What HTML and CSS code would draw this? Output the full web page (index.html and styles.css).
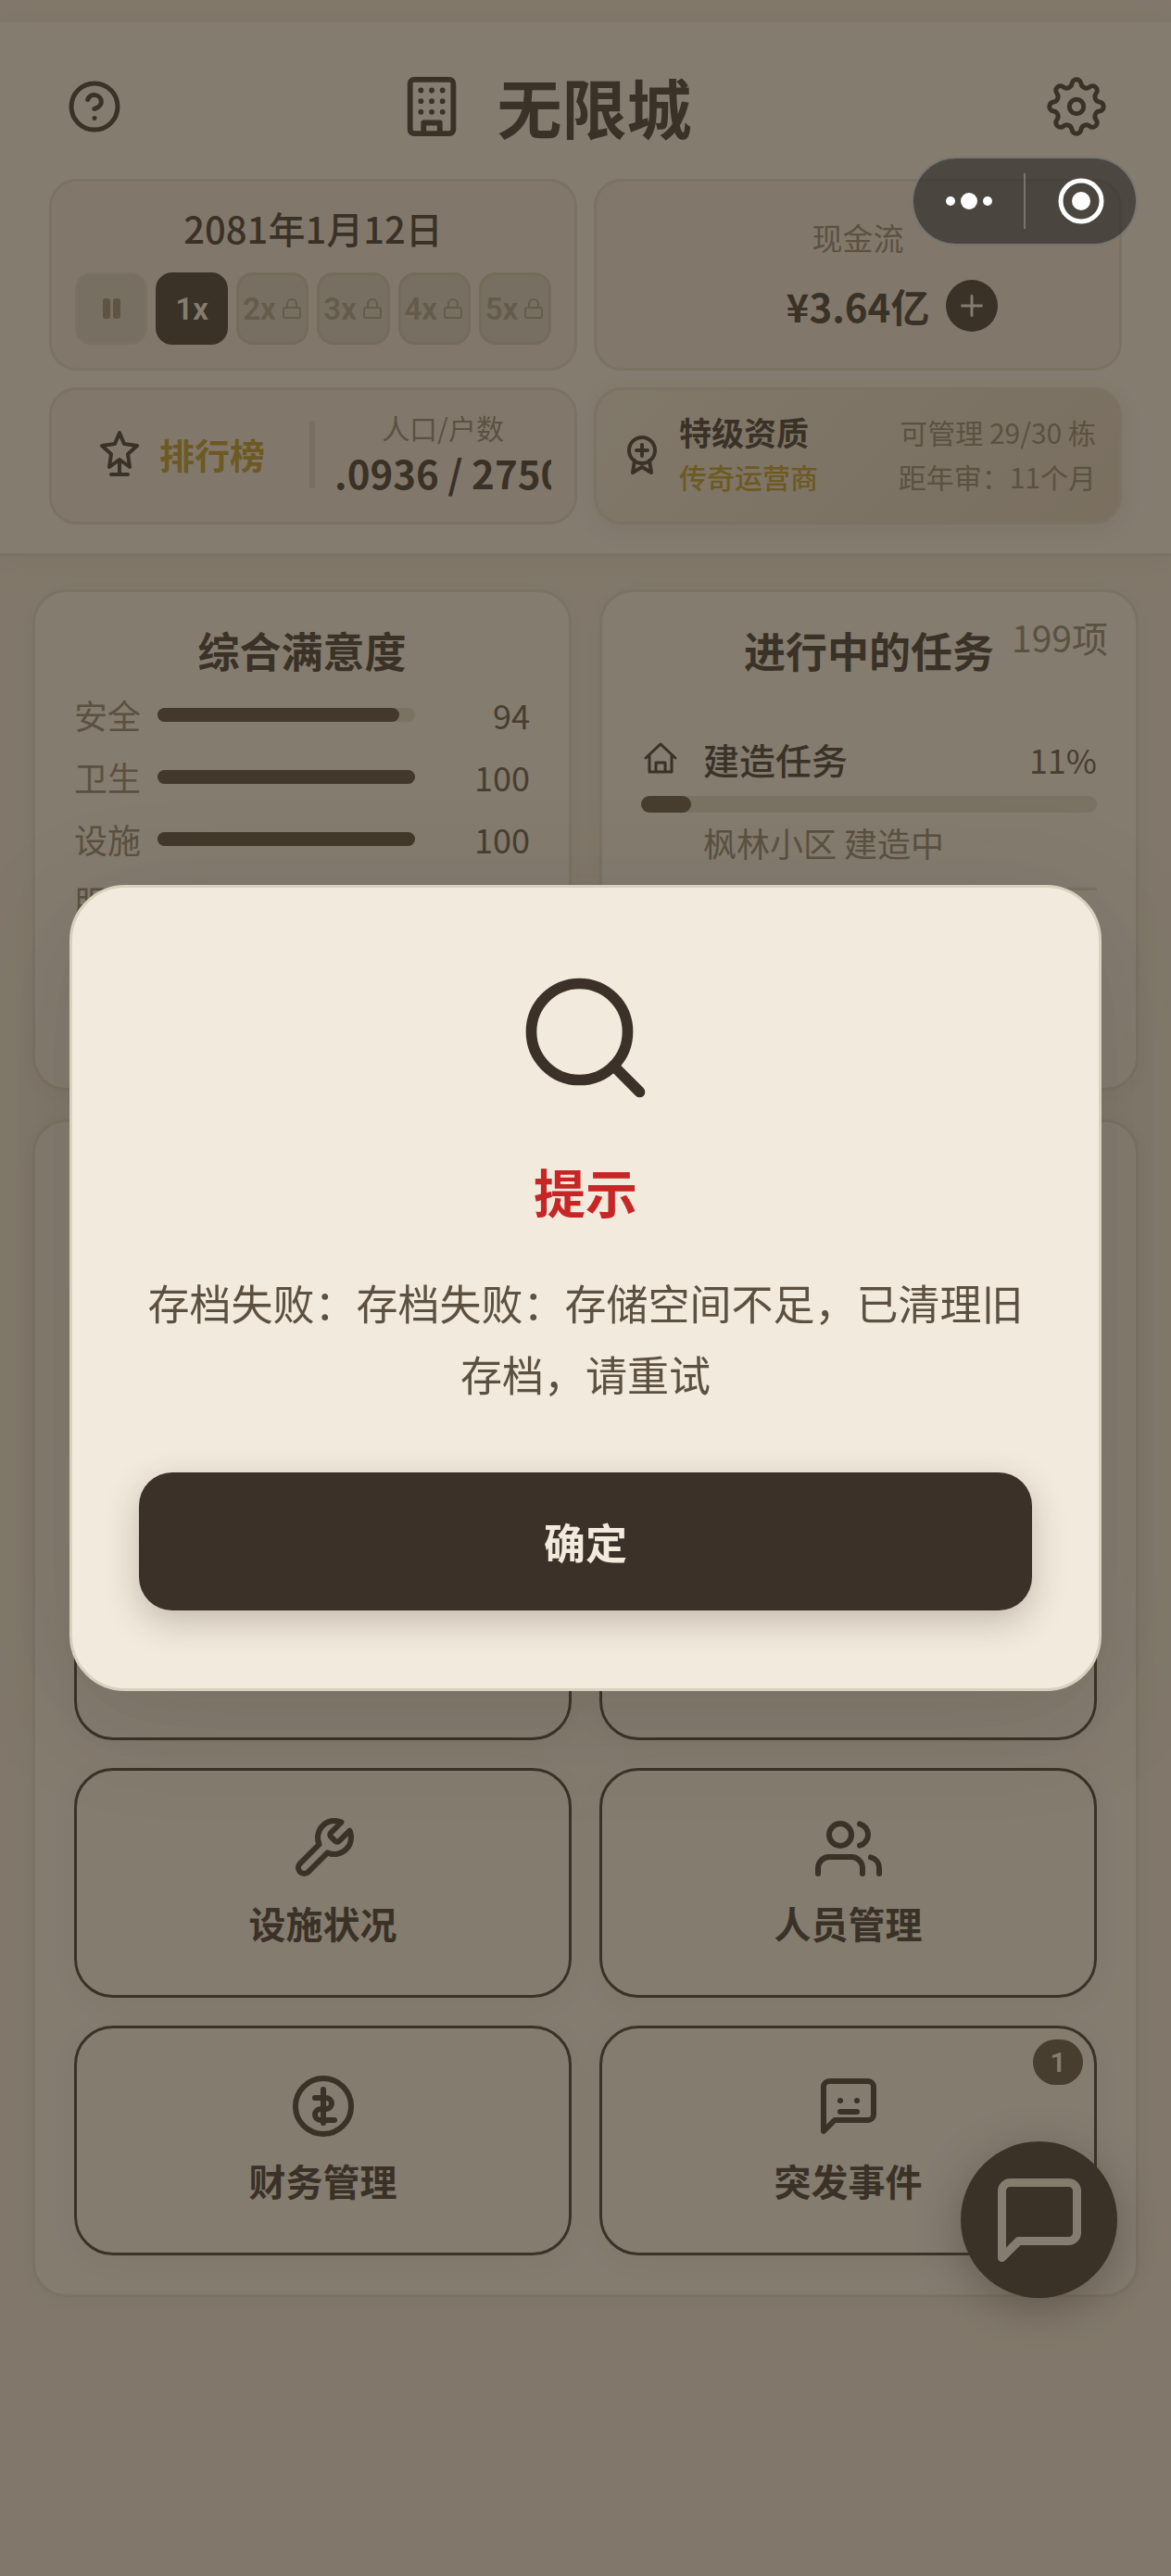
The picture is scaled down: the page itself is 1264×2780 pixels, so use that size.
FILE: index.html
```html
<!DOCTYPE html>
<html lang="zh-CN">
<head>
  <meta charset="UTF-8" />
  <meta name="viewport" content="width=device-width, initial-scale=1" />
  <title>无限城</title>
  <link rel="stylesheet" href="styles.css">
</head>
<body>
  <header class="top">
    <div class="top-bar">
      <button class="icon-btn" aria-label="帮助">
        <svg class="icon" width="60" height="60" viewBox="0 0 24 24"><circle cx="12" cy="12" r="10"/><path d="M9.09 9a3 3 0 0 1 5.83 1c0 2-3 3-3 3M12 17h.01"/></svg>
      </button>
      <div class="brand">
        <svg class="icon" width="70" height="70" viewBox="0 0 24 24"><rect x="4" y="2" width="16" height="20" rx="1.5"/><path d="M9 22v-4h6v4M8 6h.01M12 6h.01M16 6h.01M8 10h.01M12 10h.01M16 10h.01M8 14h.01M12 14h.01M16 14h.01"/></svg>
        <h1>无限城</h1>
      </div>
      <button class="icon-btn" aria-label="设置">
        <svg class="icon" width="66" height="66" viewBox="0 0 24 24" stroke-width="1.8"><circle cx="12" cy="12" r="2.8"/><path d="M10.21 2.98A1.8 1.8 0 0 1 13.79 2.98A2.1 2.1 0 0 0 17.11 4.35A1.8 1.8 0 0 1 19.65 6.89A2.1 2.1 0 0 0 21.02 10.21A1.8 1.8 0 0 1 21.02 13.79A2.1 2.1 0 0 0 19.65 17.11A1.8 1.8 0 0 1 17.11 19.65A2.1 2.1 0 0 0 13.79 21.02A1.8 1.8 0 0 1 10.21 21.02A2.1 2.1 0 0 0 6.89 19.65A1.8 1.8 0 0 1 4.35 17.11A2.1 2.1 0 0 0 2.98 13.79A1.8 1.8 0 0 1 2.98 10.21A2.1 2.1 0 0 0 4.35 6.89A1.8 1.8 0 0 1 6.89 4.35A2.1 2.1 0 0 0 10.21 2.98Z"/></svg>
      </button>
    </div>

    <div class="stats">
      <div class="stat">
        <div class="date">2081年1月12日</div>
        <div class="speeds">
          <button class="speed pause" aria-label="暂停"><i></i><i></i></button>
          <button class="speed active">1x</button>
          <button class="speed locked">2x<svg class="lock" viewBox="0 0 24 24"><rect x="3" y="11" width="18" height="11" rx="2"/><path d="M7 11V7a5 5 0 0 1 10 0v4"/></svg></button>
          <button class="speed locked">3x<svg class="lock" viewBox="0 0 24 24"><rect x="3" y="11" width="18" height="11" rx="2"/><path d="M7 11V7a5 5 0 0 1 10 0v4"/></svg></button>
          <button class="speed locked">4x<svg class="lock" viewBox="0 0 24 24"><rect x="3" y="11" width="18" height="11" rx="2"/><path d="M7 11V7a5 5 0 0 1 10 0v4"/></svg></button>
          <button class="speed locked">5x<svg class="lock" viewBox="0 0 24 24"><rect x="3" y="11" width="18" height="11" rx="2"/><path d="M7 11V7a5 5 0 0 1 10 0v4"/></svg></button>
        </div>
      </div>

      <div class="stat cash">
        <span class="cash-label">现金流</span>
        <div class="cash-row">
          <strong>¥3.64亿</strong>
          <button class="plus" aria-label="增加现金">
            <svg class="icon" width="28" height="28" viewBox="0 0 24 24" stroke-width="2.5"><path d="M12 3v18M3 12h18"/></svg>
          </button>
        </div>
      </div>

      <div class="stat people">
        <a class="rank" href="#">
          <svg class="icon" width="54" height="54" viewBox="0 0 54 54" stroke-width="4"><path d="M27 4L32 16L46 18L36 27L38 41L27 33L16 41L18 27L8 18L22 16ZM27 33V48M18 49H36"/></svg>
          排行榜
        </a>
        <span class="divider"></span>
        <div class="population">
          <span>人口/户数</span>
          <strong>.0936 / 2750</strong>
        </div>
      </div>

      <div class="stat cert">
        <svg class="icon" width="48" height="48" viewBox="0 0 48 48" stroke-width="4"><circle cx="24" cy="20" r="14"/><path d="M24 14v12M18 20h12M16 31L14 44L24 38L34 44L32 31"/></svg>
        <div class="cert-name">
          <strong>特级资质</strong>
          <span>传奇运营商</span>
        </div>
        <div class="cert-info">
          <span>可管理 29/30 栋</span>
          <span>距年审：11个月</span>
        </div>
      </div>
    </div>
  </header>

  <main>
    <section class="panel">
      <h2>综合满意度</h2>
      <div class="score"><span>安全</span><div class="bar"><i style="width: 94%"></i></div><b>94</b></div>
      <div class="score"><span>卫生</span><div class="bar"><i style="width: 100%"></i></div><b>100</b></div>
      <div class="score"><span>设施</span><div class="bar"><i style="width: 100%"></i></div><b>100</b></div>
      <div class="score"><span>服务</span></div>
    </section>

    <section class="panel">
      <h2>进行中的任务</h2>
      <span class="count">199项</span>
      <div class="task">
        <div class="task-head">
          <svg class="icon" width="42" height="42" viewBox="0 0 42 42" stroke-width="3"><path d="M5 20L21 5L37 20M9 17V35H33V17M16 35V25H26V35"/></svg>
          <strong>建造任务</strong>
          <span>11%</span>
        </div>
        <div class="task-bar"><i style="width: 11%"></i></div>
        <p>枫林小区 建造中</p>
      </div>
    </section>

    <section class="panel menu">
      <div class="tiles">
        <button class="tile" aria-label="菜单"></button>
        <button class="tile" aria-label="菜单"></button>
        <button class="tile" aria-label="菜单"></button>
        <button class="tile" aria-label="菜单"></button>
        <button class="tile">
          <svg class="icon" width="72" height="72" viewBox="0 0 24 24"><path d="M14.7 6.3a1 1 0 0 0 0 1.4l1.6 1.6a1 1 0 0 0 1.4 0l3.77-3.77a6 6 0 0 1-7.94 7.94l-6.91 6.91a2.12 2.12 0 0 1-3-3l6.91-6.91a6 6 0 0 1 7.94-7.94l-3.76 3.76z"/></svg>
          设施状况
        </button>
        <button class="tile">
          <svg class="icon" width="72" height="72" viewBox="0 0 24 24"><path d="M17 21v-2a4 4 0 0 0-4-4H5a4 4 0 0 0-4 4v2M23 21v-2a4 4 0 0 0-3-3.87M16 3.13a4 4 0 0 1 0 7.75"/><circle cx="9" cy="7" r="4"/></svg>
          人员管理
        </button>
        <button class="tile">
          <svg class="icon" width="72" height="72" viewBox="0 0 24 24"><circle cx="12" cy="12" r="10"/><path d="M12 6v12M9 9h4a2 2 0 0 1 0 4h-2a2 2 0 0 0 0 4h5"/></svg>
          财务管理
        </button>
        <button class="tile">
          <svg class="icon" width="72" height="72" viewBox="0 0 24 24"><path d="M21 15a2 2 0 0 1-2 2H7l-4 4V5a2 2 0 0 1 2-2h14a2 2 0 0 1 2 2zM9 10h.01M15 10h.01M9 14h6"/></svg>
          突发事件
          <span class="badge">1</span>
        </button>
      </div>
    </section>
  </main>

  <button class="chat" aria-label="聊天">
    <svg class="icon" width="108" height="108" viewBox="0 0 24 24"><path d="M21 15a2 2 0 0 1-2 2H7l-4 4V5a2 2 0 0 1 2-2h14a2 2 0 0 1 2 2z"/></svg>
  </button>

  <div class="mask">
    <div class="dialog" role="alertdialog" aria-labelledby="tip-title" aria-describedby="tip-text">
      <svg class="icon" width="156" height="156" viewBox="0 0 24 24" stroke-width="1.8"><circle cx="11" cy="11" r="8"/><path d="M21 21l-4.35-4.35"/></svg>
      <h2 id="tip-title">提示</h2>
      <p id="tip-text">存档失败：存档失败：存储空间不足，已清理旧存档，请重试</p>
      <button>确定</button>
    </div>
  </div>

  <!-- 小程序胶囊 -->
  <div class="capsule">
    <button aria-label="更多">
      <svg width="52" height="52" viewBox="0 0 52 52"><circle cx="6" cy="26" r="5"/><circle cx="26" cy="26" r="9"/><circle cx="46" cy="26" r="5"/></svg>
    </button>
    <span></span>
    <button aria-label="关闭">
      <svg width="52" height="52" viewBox="0 0 52 52"><circle cx="26" cy="26" r="10"/><circle cx="26" cy="26" r="22" fill="none" stroke="#fff" stroke-width="5"/></svg>
    </button>
  </div>
</body>
</html>
```
FILE: styles.css
```css
:root {
  --ink: #3b3128;
  --text: #5c5040;
  --muted: #8a7f69;
  --gold: #b8951c;
  --paper: #f2eadc;
  --base: #ebe2d1;
  --line: #d9d1bf;
}

* {
  box-sizing: border-box;
}

body {
  margin: 0;
  padding-top: 24px;
  min-height: 100vh;
  font-family: "Noto Sans CJK SC", "Noto Sans", sans-serif;
  color: var(--ink);
  background: var(--base);
}

button {
  font-family: inherit;
  color: inherit;
  border: none;
  background: none;
  padding: 0;
  cursor: pointer;
}

h1, h2, p {
  margin: 0;
}

i, b {
  font-style: normal;
  font-weight: 400;
}

strong {
  font-weight: 600;
}

.icon {
  display: block;
  flex: none;
  fill: none;
  stroke: currentColor;
  stroke-linecap: round;
  stroke-linejoin: round;
}

.icon:not([stroke-width]) {
  stroke-width: 2;
}

/* 顶部 */
.top {
  padding: 56px 53px 31px;
  background: var(--paper);
  border-bottom: 3px solid var(--line);
  box-shadow: 0 4px 30px rgba(58, 48, 41, 0.08);
}

.top-bar {
  display: flex;
  align-items: center;
  justify-content: space-between;
  height: 70px;
  padding: 0 16px 0 19px;
  margin-bottom: 43px;
}

.brand {
  display: flex;
  align-items: center;
  gap: 36px;
  padding-right: 84px;
}

.brand h1 {
  font-size: 70px;
  line-height: 70px;
  font-weight: 700;
}

.stats {
  display: grid;
  grid-template-columns: 1fr 1fr;
  gap: 18px;
}

.stat {
  min-width: 0;
  padding: 22px 25px 25px;
  border: 3px solid var(--line);
  border-radius: 30px;
  background: var(--base);
}

.date {
  margin-bottom: 20px;
  font-size: 40px;
  line-height: 56px;
  font-weight: 500;
  text-align: center;
}

.speeds {
  display: grid;
  grid-template-columns: repeat(6, 1fr);
  gap: 9px;
}

.speed {
  display: flex;
  align-items: center;
  justify-content: center;
  gap: 5px;
  height: 78px;
  border: 3px solid var(--line);
  border-radius: 18px;
  background: #d3cab9;
  font: 600 33px Roboto, sans-serif;
}

.pause {
  gap: 3px;
  border-color: #d9cfbf;
}

.pause i {
  width: 8px;
  height: 22px;
  border-radius: 3px;
  background: #96886f;
}

.active {
  border-color: var(--ink);
  background: var(--ink);
  color: var(--paper);
}

.locked {
  color: #a59983;
  border-color: #cec0a7;
}

.lock {
  flex: none;
  width: 24px;
  height: 24px;
  fill: none;
  stroke: currentColor;
  stroke-width: 2;
}

.cash {
  display: flex;
  flex-direction: column;
  align-items: stretch;
  justify-content: center;
  gap: 22px;
  text-align: center;
}

.cash-label {
  font-size: 33px;
  line-height: 48px;
  color: var(--muted);
}

.cash-row {
  display: grid;
  grid-template-columns: 1fr auto 1fr;
  align-items: center;
  gap: 18px;
}

.cash-row strong {
  grid-column: 2;
  font-size: 42px;
  line-height: 56px;
}

.plus {
  display: grid;
  place-items: center;
  width: 56px;
  height: 56px;
  border-radius: 50%;
  background: var(--ink);
  color: var(--paper);
}

.people,
.cert {
  display: flex;
  align-items: center;
  padding-top: 20px;
  padding-bottom: 24px;
}

.rank {
  display: flex;
  align-items: center;
  gap: 16px;
  padding: 0 48px 0 21px;
  color: var(--gold);
  font-size: 38px;
  line-height: 56px;
  font-weight: 600;
  white-space: nowrap;
  text-decoration: none;
}

.rank .icon {
  color: var(--ink);
}

.divider {
  flex: none;
  width: 6px;
  height: 73px;
  background: #d3cab9;
}

.population {
  flex: 1;
  min-width: 0;
  margin-left: 21px;
  display: flex;
  flex-direction: column;
  text-align: center;
}

.population span {
  font-size: 30px;
  line-height: 40px;
  color: var(--muted);
}

.population strong {
  overflow: hidden;
  font-size: 42px;
  line-height: 58px;
  text-align: left;
  white-space: nowrap;
}

.cert {
  background: linear-gradient(135deg, var(--base), #d8cab5);
  box-shadow: 0 6px 24px rgba(58, 48, 41, 0.08);
}

.cert-name,
.cert-info {
  display: flex;
  flex-direction: column;
  font-size: 30px;
  line-height: 48px;
}

.cert-name {
  margin-left: 16px;
  color: var(--gold);
  font-weight: 500;
}

.cert-name strong {
  font-size: 35px;
  color: var(--ink);
}

.cert-info {
  margin-left: auto;
  color: var(--muted);
  text-align: right;
}

/* 主体 */
main {
  display: grid;
  grid-template-columns: 1fr 1fr;
  grid-template-rows: 541px auto;
  gap: 31px 30px;
  padding: 36px 35px 200px;
}

.panel {
  position: relative;
  padding: 33px 42px 42px;
  border: 3px solid var(--line);
  border-radius: 36px;
  background: var(--paper);
  box-shadow: 0 4px 24px rgba(58, 48, 41, 0.06);
}

.panel h2 {
  margin-bottom: 15px;
  font-size: 45px;
  line-height: 60px;
  font-weight: 700;
  text-align: center;
}

.score {
  display: grid;
  grid-template-columns: 72px 278px 1fr;
  align-items: center;
  column-gap: 18px;
  height: 48px;
  margin-bottom: 19px;
  font-size: 36px;
  line-height: 48px;
  color: var(--muted);
}

.score b {
  color: var(--text);
  text-align: right;
}

.bar {
  height: 15px;
  border-radius: 8px;
  background: var(--line);
}

.bar i {
  display: block;
  height: 100%;
  border-radius: 8px;
  background: #4e4334;
}

.count {
  position: absolute;
  top: 20px;
  right: 30px;
  font-size: 39px;
  line-height: 56px;
  color: var(--muted);
}

.task {
  padding: 47px 0 25px;
  border-bottom: 3px solid var(--line);
}

.task-head {
  display: flex;
  align-items: center;
  height: 50px;
  margin-bottom: 15px;
  line-height: 50px;
}

.task-head strong {
  margin-left: 25px;
  font-size: 39px;
  font-weight: 500;
}

.task-head span {
  margin-left: auto;
  font-size: 36px;
  color: var(--text);
}

.task-bar {
  height: 18px;
  border-radius: 9px;
  background: var(--line);
}

.task-bar i {
  display: block;
  height: 100%;
  border-radius: 9px;
  background: var(--text);
}

.task p {
  margin: 8px 0 0 67px;
  font-size: 36px;
  line-height: 48px;
  color: var(--muted);
}

.menu {
  grid-column: 1 / -1;
  padding-top: 141px;
}

.tiles {
  display: grid;
  grid-template-columns: 1fr 1fr;
  grid-auto-rows: 248px;
  gap: 30px;
}

.tile {
  position: relative;
  display: flex;
  flex-direction: column;
  align-items: center;
  justify-content: center;
  gap: 16px;
  padding-bottom: 2px;
  border: 3px solid var(--ink);
  border-radius: 42px;
  font-size: 40px;
  line-height: 56px;
  font-weight: 600;
  box-shadow: 0 6px 30px rgba(58, 48, 41, 0.05);
}

.badge {
  position: absolute;
  top: 12px;
  right: 12px;
  min-width: 54px;
  border-radius: 25px;
  background: var(--text);
  color: var(--paper);
  font: 600 30px/49px Roboto, sans-serif;
}

.chat {
  position: fixed;
  right: 58px;
  bottom: 300px;
  display: grid;
  place-items: center;
  width: 169px;
  height: 169px;
  border-radius: 50%;
  background: var(--ink);
  color: var(--paper);
  box-shadow: 0 12px 48px rgba(58, 48, 41, 0.4);
}

/* 弹窗 */
.mask {
  position: fixed;
  inset: 0;
  display: flex;
  align-items: center;
  justify-content: center;
  padding: 0 75px;
  background: rgba(59, 50, 39, 0.6);
}

.dialog {
  width: 100%;
  display: flex;
  flex-direction: column;
  align-items: center;
  padding: 84px 72px;
  border: 3px solid var(--line);
  border-radius: 60px;
  background: var(--paper);
  box-shadow: 0 24px 120px rgba(58, 48, 41, 0.18);
}

.dialog h2 {
  margin: 53px 0 48px;
  font-size: 56px;
  line-height: 68px;
  color: #c62626;
}

.dialog p {
  margin-bottom: 68px;
  font-size: 45px;
  line-height: 77px;
  text-align: center;
  color: var(--text);
}

.dialog button {
  align-self: stretch;
  height: 149px;
  border-radius: 36px;
  background: var(--ink);
  color: var(--paper);
  font-size: 45px;
  font-weight: 600;
  box-shadow: 0 12px 36px rgba(58, 48, 41, 0.25);
}

.capsule {
  position: fixed;
  top: 169px;
  right: 36px;
  display: flex;
  align-items: center;
  width: 244px;
  height: 96px;
  border: 2px solid rgba(255, 255, 255, 0.25);
  border-radius: 48px;
  background: rgba(20, 20, 20, 0.5);
}

.capsule button {
  flex: 1;
  display: grid;
  place-items: center;
}

.capsule svg {
  fill: #fff;
}

.capsule span {
  width: 2px;
  height: 60px;
  background: rgba(255, 255, 255, 0.25);
}
```
